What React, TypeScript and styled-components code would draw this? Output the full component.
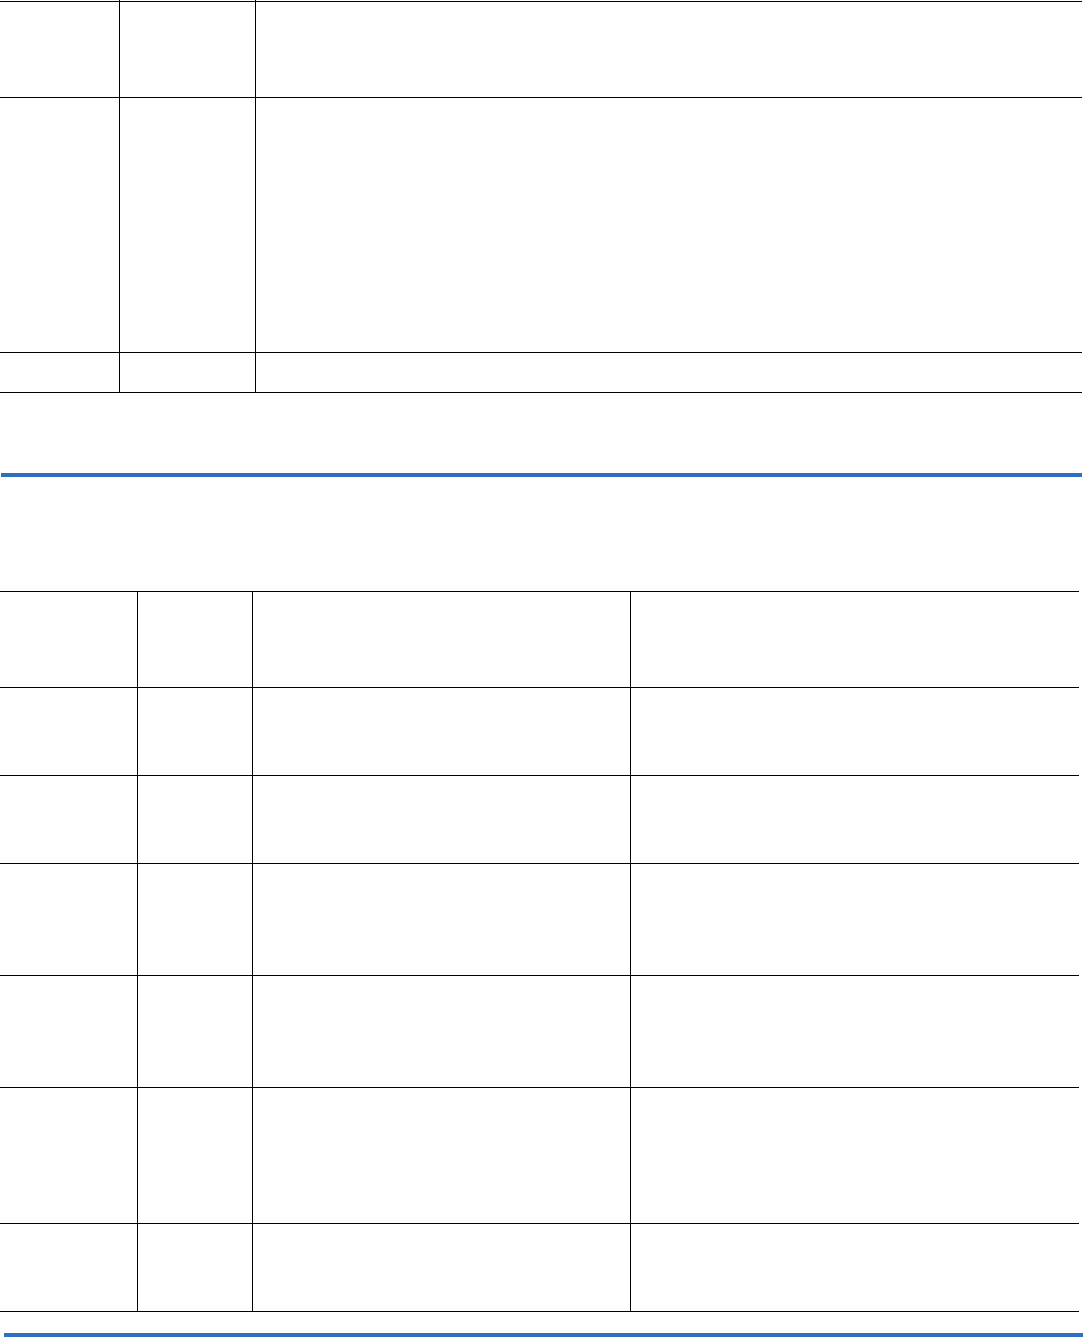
import React from "react";
import styled, { createGlobalStyle } from "styled-components";

const GlobalStyle = createGlobalStyle`
  html, body {
    margin: 0;
    padding: 0;
    background: #ffffff;
    font-family: "Liberation Sans", Arial, sans-serif;
  }
`;

const Page = styled.div`
  width: 1084px;
  display: flex;
  flex-direction: column;
`;

const Table = styled.div<{ $width: number }>`
  width: ${({ $width }) => $width}px;
  display: flex;
  flex-direction: column;
  border-bottom: 1px solid #000;
`;

const Row = styled.div<{ $cols: string; $height: number; $open?: boolean }>`
  display: grid;
  grid-template-columns: ${({ $cols }) => $cols};
  height: ${({ $height }) => $height}px;
  box-sizing: border-box;
  border-top: ${({ $open }) => ($open ? "none" : "1px solid #000")};
`;

const Cell = styled.div`
  box-sizing: border-box;
  & + & {
    border-left: 1px solid #000;
  }
`;

const Rule = styled.div<{ $top: number; $left: number; $width: number }>`
  margin-top: ${({ $top }) => $top}px;
  margin-left: ${({ $left }) => $left}px;
  width: ${({ $width }) => $width}px;
  height: 4px;
  background: #2f6fc1;
`;

const TableGap = styled.div<{ $height: number }>`
  height: ${({ $height }) => $height}px;
`;

const firstCols = "119px 136px 1fr";
const secondCols = "137px 115px 378px 1fr";

const firstRows = [96, 255, 40];
const secondRows = [96, 88, 88, 112, 112, 136, 88];

const renderRow = (cols: string, count: number, height: number, key: number, open?: boolean) => (
  <Row key={key} $cols={cols} $height={height} $open={open}>
    {Array.from({ length: count }).map((_, i) => (
      <Cell key={i} />
    ))}
  </Row>
);

const App = (): JSX.Element => {
  return (
    <>
      <GlobalStyle />
      <Page>
        <Table $width={1082}>
          {renderRow(firstCols, 3, 1, -1, true)}
          {firstRows.map((h, i) => renderRow(firstCols, 3, h, i))}
        </Table>
        <Rule $top={80} $left={1} $width={1081} />
        <TableGap $height={114} />
        <Table $width={1079}>
          {secondRows.map((h, i) => renderRow(secondCols, 4, h, i))}
        </Table>
        <Rule $top={21} $left={4} $width={1079} />
      </Page>
    </>
  );
};

export default App;
